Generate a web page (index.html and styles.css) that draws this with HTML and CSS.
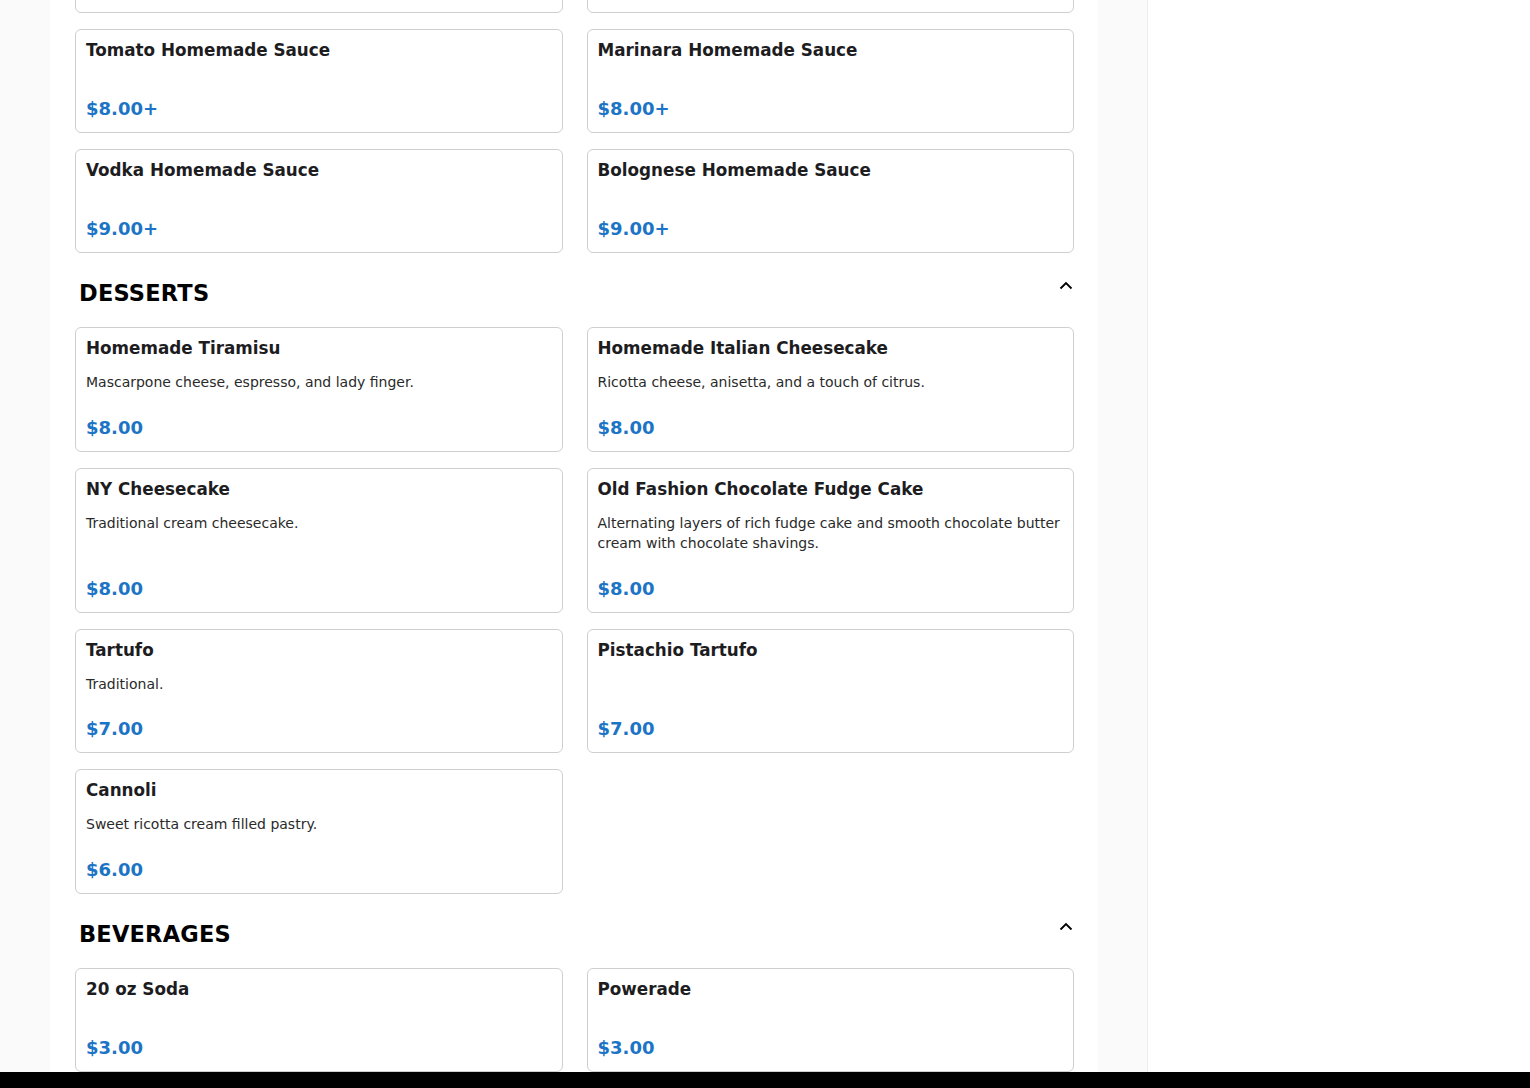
FILE: index.html
```html
<!DOCTYPE html>
<html lang="en">
  <head>
    <meta charset="UTF-8" />
    <meta name="viewport" content="width=device-width, initial-scale=1.0" />
    <title>Menu</title>
    <link rel="stylesheet" href="styles.css">
  </head>
  <body>
    <div class="viewport">
      <div class="gutter"></div>
      <main class="menu">
        <div class="menu-scroll">
          <div class="item-grid">
            <div class="item">
              <h3>Alfredo Homemade Sauce</h3>
              <span class="price">$9.00+</span>
            </div>
            <div class="item">
              <h3>Pesto Homemade Sauce</h3>
              <span class="price">$9.00+</span>
            </div>
            <div class="item">
              <h3>Tomato Homemade Sauce</h3>
              <span class="price">$8.00+</span>
            </div>
            <div class="item">
              <h3>Marinara Homemade Sauce</h3>
              <span class="price">$8.00+</span>
            </div>
            <div class="item">
              <h3>Vodka Homemade Sauce</h3>
              <span class="price">$9.00+</span>
            </div>
            <div class="item">
              <h3>Bolognese Homemade Sauce</h3>
              <span class="price">$9.00+</span>
            </div>
          </div>

          <section class="category">
            <div class="category-head">
              <h2>DESSERTS</h2>
              <svg class="chevron" width="14" height="9" viewBox="0 0 14 9"><polyline points="1.5,7.5 7,2 12.5,7.5" fill="none" stroke="#000" stroke-width="1.8"/></svg>
            </div>
            <div class="item-grid">
              <div class="item">
                <h3>Homemade Tiramisu</h3>
                <p>Mascarpone cheese, espresso, and lady finger.</p>
                <span class="price">$8.00</span>
              </div>
              <div class="item">
                <h3>Homemade Italian Cheesecake</h3>
                <p>Ricotta cheese, anisetta, and a touch of citrus.</p>
                <span class="price">$8.00</span>
              </div>
              <div class="item">
                <h3>NY Cheesecake</h3>
                <p>Traditional cream cheesecake.</p>
                <span class="price">$8.00</span>
              </div>
              <div class="item">
                <h3>Old Fashion Chocolate Fudge Cake</h3>
                <p>Alternating layers of rich fudge cake and smooth chocolate butter cream with chocolate shavings.</p>
                <span class="price">$8.00</span>
              </div>
              <div class="item">
                <h3>Tartufo</h3>
                <p>Traditional.</p>
                <span class="price">$7.00</span>
              </div>
              <div class="item">
                <h3>Pistachio Tartufo</h3>
                <span class="price">$7.00</span>
              </div>
              <div class="item">
                <h3>Cannoli</h3>
                <p>Sweet ricotta cream filled pastry.</p>
                <span class="price">$6.00</span>
              </div>
            </div>
          </section>

          <section class="category">
            <div class="category-head">
              <h2>BEVERAGES</h2>
              <svg class="chevron" width="14" height="9" viewBox="0 0 14 9"><polyline points="1.5,7.5 7,2 12.5,7.5" fill="none" stroke="#000" stroke-width="1.8"/></svg>
            </div>
            <div class="item-grid">
              <div class="item">
                <h3>20 oz Soda</h3>
                <span class="price">$3.00</span>
              </div>
              <div class="item">
                <h3>Powerade</h3>
                <span class="price">$3.00</span>
              </div>
              <div class="item">
                <h3>Bottled Water</h3>
                <span class="price">$2.00</span>
              </div>
              <div class="item">
                <h3>San Pellegrino</h3>
                <span class="price">$3.00</span>
              </div>
            </div>
          </section>
        </div>
      </main>
      <div class="gutter gutter-right"></div>
      <aside class="sidebar"></aside>
    </div>
    <div class="bottom-bar"></div>
  </body>
</html>
```

FILE: styles.css
```css
* {
  margin: 0;
  padding: 0;
  box-sizing: border-box;
}

html, body {
  height: 100%;
}

body {
  font-family: "DejaVu Sans", sans-serif;
  color: #1d1d1f;
  background-color: #ffffff;
  display: flex;
  flex-direction: column;
  overflow: hidden;
}

.viewport {
  flex: 1;
  display: flex;
  overflow: hidden;
}

.gutter {
  width: 50px;
  background-color: #fafafa;
  flex-shrink: 0;
}

.gutter-right {
  width: 49px;
}

.menu {
  width: 1048px;
  flex-shrink: 0;
  background-color: #ffffff;
  padding: 0 24px 0 25px;
  overflow: hidden;
}

.menu-scroll {
  margin-top: -91px;
}

.sidebar {
  flex: 1;
  background-color: #ffffff;
  border-left: 1px solid #ececec;
}

.item-grid {
  display: grid;
  grid-template-columns: 1fr 1fr;
  column-gap: 24px;
  row-gap: 16px;
}

.item {
  display: flex;
  flex-direction: column;
  border: 1px solid #cfcfcf;
  border-radius: 6px;
  padding: 8px 10px 10px;
  background-color: #ffffff;
}

.item h3 {
  font-size: 16.8px;
  line-height: 24px;
  font-weight: bold;
  color: #1d1d1f;
  margin-bottom: 12px;
}

.item p {
  font-size: 14px;
  line-height: 20.5px;
  color: #2a2a2a;
}

.price {
  margin-top: auto;
  padding-top: 21px;
  font-size: 18px;
  line-height: 27px;
  font-weight: bold;
  color: #1b74c5;
}

.category-head {
  display: flex;
  justify-content: space-between;
  align-items: flex-start;
  padding: 27px 1px 20px 4px;
}

.category-head h2 {
  font-size: 22.5px;
  line-height: 27px;
  font-weight: bold;
  color: #000000;
  letter-spacing: 0.2px;
}

.chevron {
  margin-top: 1px;
}

.bottom-bar {
  height: 16px;
  background-color: #000000;
  flex-shrink: 0;
}
```
